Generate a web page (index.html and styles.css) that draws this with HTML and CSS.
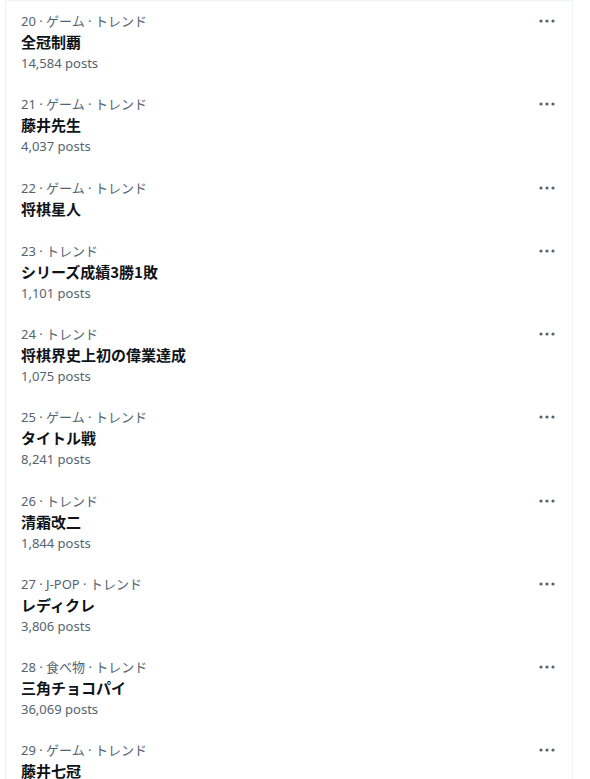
FILE: index.html
```html
<!DOCTYPE html>
<html lang="ja">
<head>
<meta charset="utf-8"/>
<meta content="width=device-width, initial-scale=1.0" name="viewport"/>
<title>トレンド</title>
<link rel="stylesheet" href="styles.css">
</head>
<body>
<main class="trend-list">
<div class="trend">
<div class="trend-body">
<div class="trend-meta">20 · ゲーム · トレンド</div>
<div class="trend-title">全冠制覇</div>
<div class="trend-posts">14,584 posts</div>
</div>
<svg class="more" viewBox="0 0 20 20"><circle cx="4" cy="10" r="1.6"/><circle cx="10" cy="10" r="1.6"/><circle cx="16" cy="10" r="1.6"/></svg>
</div>
<div class="trend">
<div class="trend-body">
<div class="trend-meta">21 · ゲーム · トレンド</div>
<div class="trend-title">藤井先生</div>
<div class="trend-posts">4,037 posts</div>
</div>
<svg class="more" viewBox="0 0 20 20"><circle cx="4" cy="10" r="1.6"/><circle cx="10" cy="10" r="1.6"/><circle cx="16" cy="10" r="1.6"/></svg>
</div>
<div class="trend">
<div class="trend-body">
<div class="trend-meta">22 · ゲーム · トレンド</div>
<div class="trend-title">将棋星人</div>
</div>
<svg class="more" viewBox="0 0 20 20"><circle cx="4" cy="10" r="1.6"/><circle cx="10" cy="10" r="1.6"/><circle cx="16" cy="10" r="1.6"/></svg>
</div>
<div class="trend">
<div class="trend-body">
<div class="trend-meta">23 · トレンド</div>
<div class="trend-title">シリーズ成績3勝1敗</div>
<div class="trend-posts">1,101 posts</div>
</div>
<svg class="more" viewBox="0 0 20 20"><circle cx="4" cy="10" r="1.6"/><circle cx="10" cy="10" r="1.6"/><circle cx="16" cy="10" r="1.6"/></svg>
</div>
<div class="trend">
<div class="trend-body">
<div class="trend-meta">24 · トレンド</div>
<div class="trend-title">将棋界史上初の偉業達成</div>
<div class="trend-posts">1,075 posts</div>
</div>
<svg class="more" viewBox="0 0 20 20"><circle cx="4" cy="10" r="1.6"/><circle cx="10" cy="10" r="1.6"/><circle cx="16" cy="10" r="1.6"/></svg>
</div>
<div class="trend">
<div class="trend-body">
<div class="trend-meta">25 · ゲーム · トレンド</div>
<div class="trend-title">タイトル戦</div>
<div class="trend-posts">8,241 posts</div>
</div>
<svg class="more" viewBox="0 0 20 20"><circle cx="4" cy="10" r="1.6"/><circle cx="10" cy="10" r="1.6"/><circle cx="16" cy="10" r="1.6"/></svg>
</div>
<div class="trend">
<div class="trend-body">
<div class="trend-meta">26 · トレンド</div>
<div class="trend-title">清霜改二</div>
<div class="trend-posts">1,844 posts</div>
</div>
<svg class="more" viewBox="0 0 20 20"><circle cx="4" cy="10" r="1.6"/><circle cx="10" cy="10" r="1.6"/><circle cx="16" cy="10" r="1.6"/></svg>
</div>
<div class="trend">
<div class="trend-body">
<div class="trend-meta">27 · J-POP · トレンド</div>
<div class="trend-title">レディクレ</div>
<div class="trend-posts">3,806 posts</div>
</div>
<svg class="more" viewBox="0 0 20 20"><circle cx="4" cy="10" r="1.6"/><circle cx="10" cy="10" r="1.6"/><circle cx="16" cy="10" r="1.6"/></svg>
</div>
<div class="trend">
<div class="trend-body">
<div class="trend-meta">28 · 食べ物 · トレンド</div>
<div class="trend-title">三角チョコパイ</div>
<div class="trend-posts">36,069 posts</div>
</div>
<svg class="more" viewBox="0 0 20 20"><circle cx="4" cy="10" r="1.6"/><circle cx="10" cy="10" r="1.6"/><circle cx="16" cy="10" r="1.6"/></svg>
</div>
<div class="trend">
<div class="trend-body">
<div class="trend-meta">29 · ゲーム · トレンド</div>
<div class="trend-title">藤井七冠</div>
</div>
<svg class="more" viewBox="0 0 20 20"><circle cx="4" cy="10" r="1.6"/><circle cx="10" cy="10" r="1.6"/><circle cx="16" cy="10" r="1.6"/></svg>
</div>
</main>
</body>
</html>
```
FILE: styles.css
```css
* {
  box-sizing: border-box;
}

body {
  margin: 0;
  padding: 0;
  background-color: #fff;
  color: #0f1419;
  font-family: 'Noto Sans', 'Noto Sans CJK JP', sans-serif;
  height: 779px;
  overflow: hidden;
}

.trend-list {
  margin-left: 5px;
  width: 568px;
  border-top: 1px solid #eff3f4;
  border-left: 1px solid #eff3f4;
  border-right: 1px solid #eff3f4;
}

.trend {
  display: flex;
  align-items: flex-start;
  padding: 10px 15px 11.25px 15px;
}

.trend-body {
  flex: 1;
}

.trend-meta,
.trend-posts {
  font-size: 13px;
  line-height: 20px;
  color: #536471;
}

.trend-title {
  font-size: 15px;
  line-height: 22px;
  font-weight: 700;
  font-family: 'Noto Sans CJK JP', sans-serif;
}

.more {
  width: 20px;
  height: 20px;
  fill: #536471;
}
```
